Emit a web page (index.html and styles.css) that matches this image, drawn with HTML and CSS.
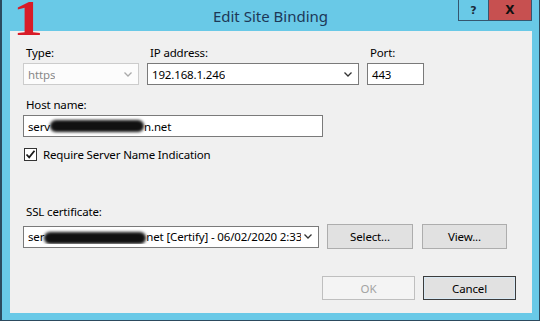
FILE: index.html
```html
<!DOCTYPE html>
<html lang="en">
<head>
    <meta charset="UTF-8">
    <meta name="viewport" content="width=device-width, initial-scale=1.0">
    <title>Edit Site Binding</title>
    <link rel="stylesheet" href="styles.css">
</head>
<body>
    <div class="window">
        <!-- Title bar -->
        <div class="titlebar">
            <span class="mark">1</span>
            <div class="spacer"></div>
            <div class="title">Edit Site Binding</div>
            <div class="caption-buttons">
                <button class="cap-btn help">?</button>
                <button class="cap-btn close">X</button>
            </div>
        </div>

        <div class="client">
            <div class="row top-row">
                <div class="field type-field">
                    <label>Type:</label>
                    <div class="combo disabled">
                        <span class="combo-text">https</span>
                        <svg class="chevron" width="8" height="5" viewBox="0 0 8 5"><polyline points="0.5,0.5 4,4 7.5,0.5"/></svg>
                    </div>
                </div>
                <div class="field ip-field">
                    <label>IP address:</label>
                    <div class="combo">
                        <span class="combo-text">192.168.1.246</span>
                        <svg class="chevron" width="8" height="5" viewBox="0 0 8 5"><polyline points="0.5,0.5 4,4 7.5,0.5"/></svg>
                    </div>
                </div>
                <div class="field port-field">
                    <label>Port:</label>
                    <div class="textbox">443</div>
                </div>
            </div>

            <div class="field host-field">
                <label>Host name:</label>
                <div class="textbox host-box">serv<span class="redact host-redact"></span>n.net</div>
            </div>

            <div class="check-row">
                <span class="checkbox">
                    <svg width="11" height="11" viewBox="0 0 11 11"><polyline points="1.5,5.5 4.2,8.3 9.5,1.8"/></svg>
                </span>
                <span>Require Server Name Indication</span>
            </div>

            <div class="field ssl-field">
                <label>SSL certificate:</label>
                <div class="row ssl-row">
                    <div class="combo ssl-combo">
                        <span class="combo-text">ser<span class="redact ssl-redact"></span>net [Certify] - 06/02/2020 2:33:25 PM</span>
                        <svg class="chevron" width="8" height="5" viewBox="0 0 8 5"><polyline points="0.5,0.5 4,4 7.5,0.5"/></svg>
                    </div>
                    <button class="btn select-btn">Select...</button>
                    <button class="btn view-btn">View...</button>
                </div>
            </div>

            <div class="footer">
                <button class="btn ok-btn" disabled>OK</button>
                <button class="btn cancel-btn">Cancel</button>
            </div>
        </div>
    </div>
</body>
</html>
```

FILE: styles.css
```css
/* General Styles */
body {
    margin: 0;
    font-family: "Noto Sans", "Liberation Sans", sans-serif;
    font-size: 11.5px;
    letter-spacing: -0.15px;
    color: #000;
    background-color: #fff;
}

.window {
    position: relative;
    width: 540px;
    height: 321px;
    box-sizing: border-box;
    background-color: #69c9e7;
    border-left: 2px solid #2c4a5e;
    border-right: 1px solid #2c4a5e;
    border-bottom: 1px solid #2c4a5e;
    display: flex;
    flex-direction: column;
}

/* Title bar */
.titlebar {
    height: 31px;
    flex-shrink: 0;
    display: grid;
    grid-template-columns: 1fr auto 1fr;
}

.title {
    font-size: 15px;
    letter-spacing: 0;
    line-height: 32px;
    color: #1d3857;
}

.caption-buttons {
    justify-self: end;
    display: flex;
    margin-right: 7px;
    height: 21px;
}

.cap-btn {
    height: 21px;
    box-sizing: border-box;
    border: 1px solid #35566f;
    border-top: none;
    font-family: "DejaVu Sans", sans-serif;
    font-weight: bold;
    font-size: 11px;
    color: #1b2b3a;
    padding: 0;
    cursor: pointer;
}

.cap-btn.help {
    width: 30px;
    background-color: #69c9e7;
    border-right: none;
}

.cap-btn.close {
    width: 44px;
    background-color: #c75050;
    color: #111;
    font-size: 12px;
}

/* Red annotation over the window */
.mark {
    position: absolute;
    left: 11px;
    top: 0;
    height: 36px;
    font-family: "Liberation Serif", serif;
    font-weight: bold;
    font-size: 50px;
    line-height: 36px;
    color: #d81c28;
    transform: scaleX(1.2);
    transform-origin: left top;
    z-index: 2;
}

/* Client area */
.client {
    flex: 1;
    margin: 0 7px 7px 8px;
    background-color: #f0f0f0;
    padding: 14px 16px 0 13px;
}

.row {
    display: flex;
    gap: 8px;
}

label {
    display: block;
    padding-left: 3px;
    line-height: 15px;
    margin-bottom: 3px;
}

.combo,
.textbox {
    height: 22px;
    box-sizing: border-box;
    border: 1px solid #7a7a7a;
    background-color: #fff;
    display: flex;
    align-items: center;
    padding: 0 4px;
    white-space: nowrap;
}

.combo {
    justify-content: space-between;
    gap: 3px;
    padding-right: 6px;
}

.combo-text {
    overflow: hidden;
    white-space: nowrap;
}

.chevron {
    flex-shrink: 0;
    fill: none;
    stroke: #333;
    stroke-width: 1.3;
}

.combo.disabled {
    border-color: #cccccc;
    background-color: #fcfcfc;
    color: #888;
}

.combo.disabled .chevron {
    stroke: #aaa;
}

.type-field .combo {
    width: 116px;
}

.ip-field .combo {
    width: 212px;
}

.port-field .textbox {
    width: 57px;
}

.host-field {
    margin-top: 12px;
}

.host-box {
    width: 300px;
}

.redact {
    display: inline-block;
    height: 12px;
    background-color: #111;
    border-radius: 6px;
    filter: blur(1.6px);
    vertical-align: middle;
}

.host-redact {
    width: 94px;
}

.ssl-redact {
    width: 102px;
}

/* Checkbox */
.check-row {
    margin-top: 11px;
    display: flex;
    align-items: center;
    gap: 6px;
    height: 13px;
    padding-left: 1px;
}

.checkbox {
    width: 13px;
    height: 13px;
    box-sizing: border-box;
    border: 1px solid #333;
    background-color: #fff;
    display: flex;
    align-items: center;
    justify-content: center;
}

.checkbox svg {
    fill: none;
    stroke: #1a1a1a;
    stroke-width: 1.8;
}

/* SSL certificate */
.ssl-field {
    margin-top: 43px;
}

.ssl-field label {
    margin-bottom: 5px;
}

.ssl-row {
    align-items: center;
}

.ssl-combo {
    width: 296px;
}

.btn {
    font-family: "Noto Sans", "Liberation Sans", sans-serif;
    font-size: 11.5px;
    letter-spacing: -0.15px;
    background-color: #e1e1e1;
    border: 1px solid #adadad;
    color: #000;
    padding: 0;
    cursor: pointer;
}

.select-btn,
.view-btn {
    height: 25px;
    width: 86px;
}

.view-btn {
    width: 85px;
    margin-left: 1px;
}

/* Footer buttons */
.footer {
    margin-top: 27px;
    display: flex;
    justify-content: flex-end;
    gap: 8px;
}

.ok-btn,
.cancel-btn {
    height: 24px;
    width: 93px;
}

.ok-btn {
    background-color: #f4f4f4;
    border-color: #bfbfbf;
    color: #a3a3a3;
}

.cancel-btn {
    border-color: #3c3c3c;
    box-shadow: inset 0 0 0 1px #d8e8f3;
}
```
